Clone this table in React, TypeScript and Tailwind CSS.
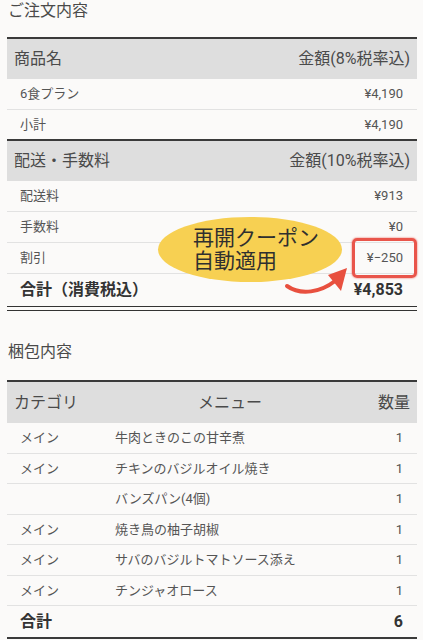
const font = { fontFamily: '"Roboto", "Noto Sans CJK JP", sans-serif' };

const feeRows = [
  { label: '配送料', value: '¥913' },
  { label: '手数料', value: '¥0' },
];

const menuRows = [
  { cat: 'メイン', menu: '牛肉ときのこの甘辛煮', qty: 1 },
  { cat: 'メイン', menu: 'チキンのバジルオイル焼き', qty: 1 },
  { cat: '', menu: 'バンズパン(4個)', qty: 1 },
  { cat: 'メイン', menu: '焼き鳥の柚子胡椒', qty: 1 },
  { cat: 'メイン', menu: 'サバのバジルトマトソース添え', qty: 1 },
  { cat: 'メイン', menu: 'チンジャオロース', qty: 1 },
];

function HeadRow({ left, right }: { left: string; right: string }) {
  return (
    <div className="flex items-center justify-between h-[42px] bg-[#dedede] border-t-2 border-[#3a3a3a] px-[7px] text-[16px] text-[#4a4a4a]">
      <span>{left}</span>
      <span>{right}</span>
    </div>
  );
}

function Row({ label, value }: { label: string; value: string }) {
  return (
    <div className="flex items-center justify-between h-[31px] border-b border-[#e2e2e2] pl-[13px] pr-[14px] text-[13px] text-[#555]">
      <span>{label}</span>
      <span>{value}</span>
    </div>
  );
}

export default function App() {
  return (
    <div className="w-[423px] h-[640px] overflow-hidden bg-[#fbfaf9]" style={font}>
      <h2 className="pl-[8px] pt-[1px] text-[16px] text-[#4a4a4a] leading-[20px]">ご注文内容</h2>

      <div className="mx-[7px] mt-[16px] w-[410px]">
        <HeadRow left="商品名" right="金額(8%税率込)" />
        <Row label="6食プラン" value="¥4,190" />
        <div className="flex items-center justify-between h-[29px] pl-[13px] pr-[14px] text-[13px] text-[#555]">
          <span>小計</span>
          <span>¥4,190</span>
        </div>

        <HeadRow left="配送・手数料" right="金額(10%税率込)" />
        {feeRows.map((r) => (
          <Row key={r.label} label={r.label} value={r.value} />
        ))}

        <div className="relative">
          <Row label="割引" value="¥−250" />
          <div className="flex items-center justify-between h-[32px] pl-[13px] pr-[14px] text-[16px] font-bold text-[#333]">
            <span>合計（消費税込）</span>
            <span>¥4,853</span>
          </div>
          <div className="border-t-[1.5px] border-b-[1.5px] border-[#333] h-[5px]" />

          {/* coupon callout */}
          <div className="absolute left-[151px] top-[-26px] w-[184px] h-[65px] rounded-[50%] bg-[#f7d052] flex flex-col justify-center pl-[35px] text-[21px] leading-[23px] text-[#2f2f2f]">
            <span>再開クーポン</span>
            <span>自動適用</span>
          </div>
          <div className="absolute left-[345px] top-[-5px] w-[65px] h-[40px] rounded-[5px] border-[3px] border-[#e9554b] shadow-[0_0_2px_#e9554b]" />
          <svg className="absolute left-[270px] top-[17px]" width="80" height="40" viewBox="0 0 80 40">
            <path d="M10 26 C 24 36, 44 32, 58 21" fill="none" stroke="#e8503f" strokeWidth="4" strokeLinecap="round" />
            <path d="M51 15 L 70 8 L 64 31 Z" fill="#e8503f" />
          </svg>
        </div>
      </div>

      <h2 className="pl-[8px] mt-[31px] text-[16px] text-[#4a4a4a] leading-[20px]">梱包内容</h2>

      <div className="mx-[7px] mt-[18px] w-[410px]">
        <div className="flex items-center h-[43px] bg-[#dedede] border-t-2 border-[#3a3a3a] px-[7px] text-[16px] text-[#4a4a4a]">
          <span className="w-[68px]">カテゴリ</span>
          <span className="flex-1 text-center">メニュー</span>
          <span>数量</span>
        </div>
        {menuRows.map((r, i) => (
          <div key={i} className="flex items-center h-[30.5px] border-b border-[#e2e2e2] pl-[13px] pr-[14px] text-[13px] text-[#555]">
            <span className="w-[95px]">{r.cat}</span>
            <span className="flex-1">{r.menu}</span>
            <span>{r.qty}</span>
          </div>
        ))}
        <div className="flex items-center justify-between h-[33px] border-b-2 border-[#3a3a3a] pl-[13px] pr-[14px] text-[16px] font-bold text-[#333]">
          <span>合計</span>
          <span>6</span>
        </div>
      </div>
    </div>
  );
}
